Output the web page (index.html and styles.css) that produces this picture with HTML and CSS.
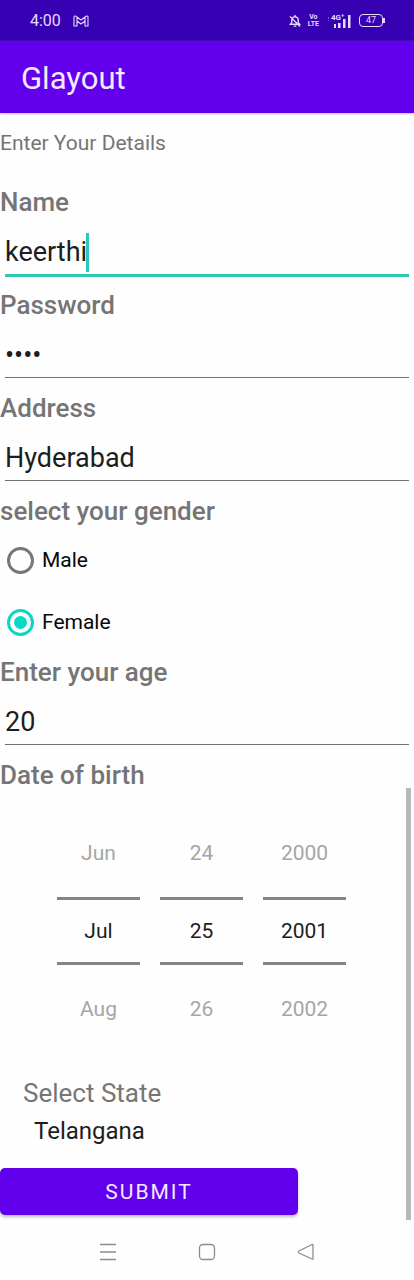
FILE: index.html
```html
<!DOCTYPE html>
<html lang="en">
<head>
<meta charset="utf-8">
<meta name="viewport" content="width=device-width, initial-scale=1">
<title>Glayout</title>
<link rel="stylesheet" href="styles.css">
</head>
<body>
<div class="status">
  <span class="clock">4:00</span>
  <svg class="mail" width="16" height="12" viewBox="0 0 16 12" fill="none" stroke="currentColor" stroke-width="1.1" stroke-linejoin="round"><path d="M1 2Q1 .8 2.500 1L8 5l5.500-4Q15 .8 15 2v9h-3V6L8 9 4 6v5H1zM4 6V2.500M12 6V2.500"/></svg>
  <div class="indicators">
    <svg width="12" height="14" viewBox="0 0 13 14" fill="none" stroke="currentColor" stroke-width="1.500"><path d="M1.500 10.500h10l-1.500-2V6a3.500 3.500 0 0 0-7 0v2.500zM5.500 1.500h2M5 12.500h3M1 2l11 11"/></svg>
    <span class="volte"><span>Vo</span><span>LTE</span></span>
    <span class="network"><span class="gen">4G⁺</span>
      <svg width="26" height="14" viewBox="0 0 26 14" fill="currentColor"><path d="M8 10h2v4H8zM12 9h2.500v5H12zM17 5h2.500v9H17zM22 1h2.500v13H22z"/><path d="M2 3h1v2H2zM2 6h1v1H2z" opacity=".4"/></svg>
    </span>
    <span class="battery">47</span>
  </div>
</div>
<header class="appbar"><h1>Glayout</h1></header>
<main class="content">
  <form class="form">
    <p class="intro">Enter Your Details</p>
    <label class="label" for="name">Name</label>
    <div class="field active"><input class="entry" id="name" type="text" value="keerthi"><span class="caret"></span></div>
    <label class="label" for="password">Password</label>
    <div class="field"><input class="entry password" id="password" type="password" value="1234"></div>
    <label class="label" for="address">Address</label>
    <div class="field"><input class="entry" id="address" type="text" value="Hyderabad"></div>
    <fieldset class="gender">
      <legend class="label">select your gender</legend>
      <label class="option"><input type="radio" name="gender">Male</label>
      <label class="option"><input type="radio" name="gender" checked>Female</label>
    </fieldset>
    <label class="label" for="age">Enter your age</label>
    <div class="field"><input class="entry" id="age" type="text" inputmode="numeric" value="20"></div>
    <fieldset class="birth">
      <legend class="label">Date of birth</legend>
      <div class="picker">
        <div class="wheel"><button type="button">Jun</button><input type="text" aria-label="Month" value="Jul"><button type="button">Aug</button></div>
        <div class="wheel"><button type="button">24</button><input type="text" aria-label="Day" value="25"><button type="button">26</button></div>
        <div class="wheel"><button type="button">2000</button><input type="text" aria-label="Year" value="2001"><button type="button">2002</button></div>
      </div>
    </fieldset>
    <label class="state-label" for="state">Select State</label>
    <select class="state" id="state"><option>Telangana</option></select>
    <button class="submit" type="submit">SUBMIT</button>
  </form>
  <div class="scrollbar"></div>
</main>
<nav class="navbar">
  <button type="button" aria-label="Recent apps"><svg width="18" height="18" viewBox="0 0 18 18"><path d="M1 1.500h16M1 9h16M1 16.500h16"/></svg></button>
  <button type="button" aria-label="Home"><svg width="18" height="18" viewBox="0 0 18 18"><rect x="1.500" y="1.500" width="15" height="15" rx="3.500"/></svg></button>
  <button type="button" aria-label="Back"><svg width="18" height="18" viewBox="0 0 18 18"><path d="M16 2.500v13q0 1-1 .5L2 10q-1.500-1 0-2L15 1.500q1-.5 1 1z"/></svg></button>
</nav>
</body>
</html>
```
FILE: styles.css
```css
* { box-sizing: border-box; }
body {
  margin: 0;
  background: #fefefe;
  color: #1d1d1d;
  font-family: Roboto, sans-serif;
}
button, input, select { font: inherit; color: inherit; }
.status {
  display: flex;
  align-items: center;
  gap: 12px;
  height: 41px;
  padding: 0 31px 0 30px;
  background: #3700b3;
  color: #e6daff;
}
.clock { font-size: 16px; }
.indicators {
  display: flex;
  align-items: center;
  gap: 7px;
  margin-left: auto;
}
.volte {
  display: grid;
  justify-items: center;
  font-size: 7px;
  font-weight: 700;
  line-height: 7px;
}
.network { position: relative; display: flex; }
.gen {
  position: absolute;
  left: 5px;
  top: 0;
  font-size: 8px;
  font-weight: 700;
  line-height: 8px;
}
.battery {
  position: relative;
  width: 24px;
  height: 13px;
  border: 1px solid currentColor;
  border-radius: 4px;
  font-size: 9px;
  line-height: 11px;
  text-align: center;
}
.battery::after {
  content: "";
  position: absolute;
  right: -3px;
  top: 3px;
  width: 2px;
  height: 5px;
  background: currentColor;
}
.appbar {
  display: flex;
  align-items: center;
  height: 72px;
  padding: 2px 21px 0;
  background: #6200ee;
  color: #f3eaff;
  box-shadow: 0 1px 2px #bbb;
}
.appbar h1 { margin: 0; font-size: 31px; font-weight: 400; }
.content { position: relative; padding-bottom: 5px; }
.intro {
  margin: 0;
  padding: 15px 0 29px;
  color: #757575;
  font-size: 21px;
  line-height: 30px;
}
.label {
  display: block;
  padding: 0;
  color: #757575;
  font-size: 26px;
  font-weight: 500;
  line-height: 31px;
}
.field { position: relative; height: 72px; padding: 10px 5px 14px; }
.entry {
  display: block;
  width: 100%;
  height: 47px;
  padding: 2px 0 0;
  border: 0;
  border-bottom: 1px solid #707070;
  border-radius: 0;
  outline: 0;
  background: none;
  font-size: 27px;
}
.active .entry { height: 49px; border-bottom: 3px solid #2cc8b8; }
.caret {
  position: absolute;
  left: 86px;
  top: 15px;
  width: 3px;
  height: 39px;
  background: #2cc8b8;
}
fieldset { min-width: 0; margin: 0; padding: 0; border: 0; }
.gender { padding: 2px 0 4px; }
.option {
  display: flex;
  align-items: center;
  gap: 8px;
  height: 62px;
  padding-left: 7px;
  color: #080808;
  font-size: 21px;
}
.option input {
  appearance: none;
  display: grid;
  place-items: center;
  width: 27px;
  height: 27px;
  margin: 0;
  border: 3px solid #777;
  border-radius: 50%;
}
.option input:checked { border-color: #0cd6c4; }
.option input:checked::before {
  content: "";
  width: 13px;
  height: 13px;
  border-radius: 50%;
  background: #0cd6c4;
}
.picker {
  display: flex;
  gap: 20px;
  padding: 18px 0 25px 57px;
  font-size: 21px;
}
.wheel { display: grid; grid-template-rows: 88px 68px 88px; width: 83px; }
.wheel button { padding: 0; border: 0; background: none; color: #a6a6a6; }
.wheel input {
  width: 100%;
  padding: 0;
  border: solid #858585;
  border-width: 3px 0;
  outline: 0;
  background: none;
  text-align: center;
}
.state-label {
  display: block;
  padding-left: 23px;
  color: #757575;
  font-size: 26px;
  line-height: 31px;
}
.state {
  appearance: none;
  display: block;
  height: 44px;
  margin-bottom: 15px;
  padding: 0 34px;
  border: 0;
  background: none;
  font-size: 24px;
}
.submit {
  display: block;
  width: 72%;
  height: 47px;
  border: 0;
  border-radius: 5px;
  background: #6200ee;
  box-shadow: 0 2px 3px #bbb;
  color: #f3eaff;
  font-size: 21px;
  letter-spacing: 2px;
}
.scrollbar {
  position: absolute;
  right: 3px;
  bottom: 0;
  width: 5px;
  height: 39%;
  background: #b8b8b8;
}
.navbar {
  display: flex;
  justify-content: center;
  align-items: center;
  gap: 81px;
  height: 60px;
  padding-top: 3px;
}
.navbar button { display: flex; padding: 0; border: 0; background: none; }
.navbar svg { fill: none; stroke: #8c8c8c; stroke-width: 1.3px; }
```
